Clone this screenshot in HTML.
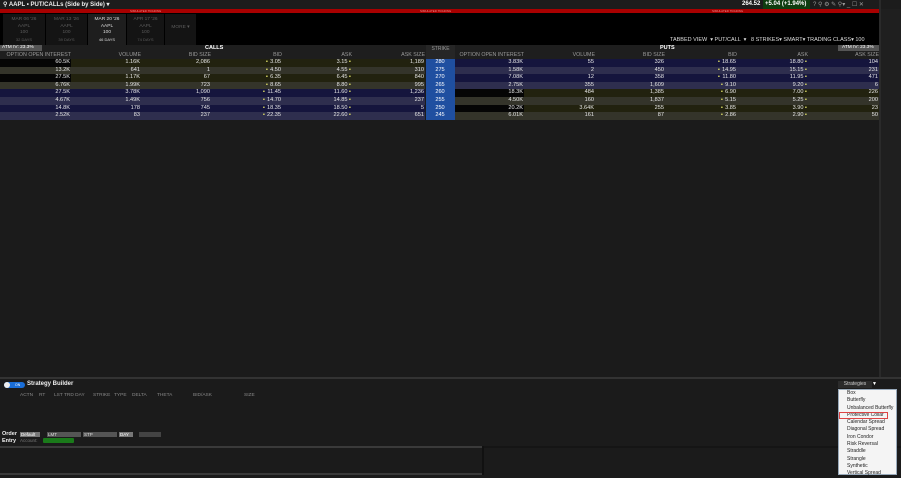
<!DOCTYPE html><html><head><style>
*{margin:0;padding:0;box-sizing:border-box}
body{width:901px;height:475px;background:#1b1b1b;font-family:"Liberation Sans",sans-serif;color:#ccc;position:relative;overflow:hidden;font-size:5.5px}
.a{position:absolute;white-space:nowrap}
.row{position:absolute;height:7.6px;line-height:7.6px;font-size:5.6px;color:#e6e6e6}
.row div{position:absolute;top:0;height:7.6px;text-align:right;padding-right:1px}
.hd{position:absolute;top:52px;height:7px;line-height:7px;font-size:5.3px;color:#9a9a9a;text-align:right}
.tab{position:absolute;top:14px;height:31px;background:#141414;text-align:center;font-size:4.8px;color:#5c5c5c;line-height:6.5px;padding-top:3px}
.dd div{height:7.3px;line-height:7.3px;padding-left:8px;font-size:5px;color:#222;white-space:nowrap;overflow:hidden}
</style></head><body>
<div class="a" style="left:0;top:0;width:901px;height:9px;background:#1c1c1c"></div>
<div class="a" style="left:3px;top:1px;font-size:6px;color:#eee;font-weight:bold">⚲ AAPL • PUT/CALLs (Side by Side) ▾</div>
<div class="a" style="left:742px;top:1px;font-size:6px;color:#fff;font-weight:bold">264.52</div>
<div class="a" style="left:763px;top:0;width:47px;height:9px;background:#0e3d10;font-size:6px;color:#fff;font-weight:bold;padding:1px 0 0 2px">+5.04 (+1.94%)</div>
<div class="a" style="left:813px;top:1px;font-size:6px;color:#999">? ⚲ ⚙ ✎ ⚲▾ _ ☐ ✕</div>
<div class="a" style="left:0;top:9px;width:880px;height:4px;background:#a80000;font-size:3px;color:#e88;line-height:4px"><span style="position:absolute;left:130px">SIMULATED TRADING</span><span style="position:absolute;left:420px">SIMULATED TRADING</span><span style="position:absolute;left:712px">SIMULATED TRADING</span></div>
<div class="a" style="left:0;top:13px;width:880px;height:32px;background:#000"></div>
<div class="tab" style="left:3px;width:42px">MAR 06 '26<br>AAPL<br>100<br><span style="font-size:4px">32 DAYS</span></div>
<div class="tab" style="left:46px;width:41px">MAR 13 '26<br>AAPL<br>100<br><span style="font-size:4px">39 DAYS</span></div>
<div class="tab" style="left:88px;width:38px;background:#1e1e1e;color:#ddd">MAR 20 '26<br>AAPL<br>100<br><span style="font-size:4px">46 DAYS</span></div>
<div class="tab" style="left:127px;width:37px">APR 17 '26<br>AAPL<br>100<br><span style="font-size:4px">74 DAYS</span></div>
<div class="tab" style="left:165px;width:31px;padding-top:11px">MORE ▾</div>
<div class="a" style="left:670px;top:37px;font-size:5.5px;color:#ddd">TABBED VIEW &nbsp;▾ PUT/CALL &nbsp;▾ &nbsp; 8 STRIKES▾ SMART▾ TRADING CLASS▾ 100</div>
<div class="a" style="left:0;top:45px;width:880px;height:14px;background:#1e1e1e"></div>
<div class="a" style="left:0;top:45px;width:42px;height:6px;background:#555;font-size:4.8px;color:#fff;line-height:6px;padding-left:2px">ATM IV: 23.3%</div>
<div class="a" style="left:838px;top:45px;width:42px;height:6px;background:#555;font-size:4.8px;color:#fff;line-height:6px;padding-left:4px">ATM IV: 23.3%</div>
<div class="a" style="left:205px;top:45px;font-size:5.5px;color:#fff;font-weight:bold">CALLS</div>
<div class="a" style="left:660px;top:45px;font-size:5.5px;color:#fff;font-weight:bold">PUTS</div>
<div class="a" style="left:426px;top:45px;width:29px;height:14px;background:#262626;font-size:5px;color:#999;text-align:center;line-height:8px">STRIKE</div>
<div class="hd" style="left:0;width:71px">OPTION OPEN INTEREST</div>
<div class="hd" style="left:71px;width:70px">VOLUME</div>
<div class="hd" style="left:141px;width:70px">BID SIZE</div>
<div class="hd" style="left:211px;width:71px">BID</div>
<div class="hd" style="left:282px;width:70px">ASK</div>
<div class="hd" style="left:352px;width:73px">ASK SIZE</div>
<div class="hd" style="left:455px;width:69px">OPTION OPEN INTEREST</div>
<div class="hd" style="left:524px;width:71px">VOLUME</div>
<div class="hd" style="left:595px;width:70px">BID SIZE</div>
<div class="hd" style="left:665px;width:72px">BID</div>
<div class="hd" style="left:737px;width:71px">ASK</div>
<div class="hd" style="left:808px;width:71px">ASK SIZE</div>
<div id="rows"></div>
<script>
var c=[["60.5K","1.16K","2,086","3.05","3.15","1,189","280"],["13.2K","641","1","4.50","4.55","310","275"],["27.5K","1.17K","67","6.35","6.45","840","270"],["6.76K","1.99K","723","8.65","8.80","995","265"],["27.5K","3.78K","1,090","11.45","11.60","1,236","260"],["4.67K","1.49K","756","14.70","14.85","237","255"],["14.8K","178","745","18.35","18.50","5","250"],["2.52K","83","237","22.35","22.60","651","245"]];
var p=[["3.83K","55","326","18.65","18.80","104"],["1.58K","2","450","14.95","15.15","231"],["7.08K","12","358","11.80","11.95","471"],["2.75K","355","1,609","9.10","9.20","6"],["18.3K","484","1,385","6.90","7.00","226"],["4.50K","160","1,837","5.15","5.25","200"],["20.2K","3.64K","255","3.85","3.90","23"],["6.01K","161","87","2.86","2.90","50"]];
var yA=["#22220f","#34342a"],nA=["#15153d","#2e2e4e"],h="";
var cx=[[0,71],[71,141],[141,211],[211,282],[282,352],[352,425]],px=[[455,524],[524,595],[595,665],[665,737],[737,808],[808,879]];
for(var i=0;i<8;i++){var y=59+i*7.6;var ci=i<4?yA[i%2]:nA[i%2],pi=i<4?nA[i%2]:yA[i%2];
h+='<div class="row" style="top:'+y+'px;left:0;width:901px">';
for(var j=0;j<6;j++){var bg=ci;if(j==0&&i<4&&i%2==0)bg="#050505";var t=c[i][j];if(j==3)t='<span style="color:#dd6;float:left;padding-left:'+(t.length>4?52:55)+'px">▪</span>'+t;if(j==4)t=t+' <span style="color:#dd6">▪</span>';h+='<div style="left:'+cx[j][0]+'px;width:'+(cx[j][1]-cx[j][0])+'px;background:'+bg+'">'+t+'</div>';}
h+='<div style="left:426px;width:29px;background:#1f4fa0;text-align:center;color:#fff">'+c[i][6]+'</div>';
for(var j=0;j<6;j++){var bg=pi;if(j==0&&i>=4&&i%2==0)bg="#050505";var t=p[i][j];if(j==3)t='<span style="color:#dd6;float:left;padding-left:'+(t.length>4?53:56)+'px">▪</span>'+t;if(j==4)t=t+' <span style="color:#dd6">▪</span>';h+='<div style="left:'+px[j][0]+'px;width:'+(px[j][1]-px[j][0])+'px;background:'+bg+'">'+t+'</div>';}
h+='</div>';}
document.getElementById('rows').innerHTML=h;
</script>
<div class="a" style="left:879px;top:0;width:2px;height:378px;background:#2a2a2a"></div>
<div class="a" style="left:881px;top:9px;width:20px;height:369px;background:#1f1f1f"></div>
<div class="a" style="left:0;top:377px;width:901px;height:2px;background:#333"></div>
<div class="a" style="left:4px;top:382px;width:21px;height:6px;background:#1a6ed8;border-radius:3px"></div>
<div class="a" style="left:4px;top:382px;width:6px;height:6px;background:#eee;border-radius:3px"></div>
<div class="a" style="left:15px;top:382px;font-size:3.5px;color:#fff;line-height:6px">ON</div>
<div class="a" style="left:27px;top:381px;font-size:6px;color:#eee;font-weight:bold">Strategy Builder</div>
<div class="a" style="left:20px;top:393px;font-size:4.8px;color:#888">ACTN</div>
<div class="a" style="left:39px;top:393px;font-size:4.8px;color:#888">RT</div>
<div class="a" style="left:54px;top:393px;font-size:4.8px;color:#888">LST TRD DAY</div>
<div class="a" style="left:93px;top:393px;font-size:4.8px;color:#888">STRIKE</div>
<div class="a" style="left:114px;top:393px;font-size:4.8px;color:#888">TYPE</div>
<div class="a" style="left:132px;top:393px;font-size:4.8px;color:#888">DELTA</div>
<div class="a" style="left:157px;top:393px;font-size:4.8px;color:#888">THETA</div>
<div class="a" style="left:193px;top:393px;font-size:4.8px;color:#888">BID/ASK</div>
<div class="a" style="left:244px;top:393px;font-size:4.8px;color:#888">SIZE</div>
<div class="a" style="left:2px;top:431px;font-size:5.5px;color:#eee;font-weight:bold;line-height:6.5px">Order<br>Entry</div>
<div class="a" style="left:20px;top:432px;width:20px;height:5px;background:#777;font-size:4.5px;color:#fff;line-height:5px;padding-left:1px">Default</div>
<div class="a" style="left:47px;top:432px;width:34px;height:5px;background:#555;font-size:4.5px;color:#ddd;line-height:5px;padding-left:1px">LMT</div>
<div class="a" style="left:83px;top:432px;width:34px;height:5px;background:#555;font-size:4.5px;color:#ddd;line-height:5px;padding-left:1px">STP</div>
<div class="a" style="left:119px;top:432px;width:14px;height:5px;background:#777;font-size:4.5px;color:#fff;line-height:5px;padding-left:1px">DAY</div>
<div class="a" style="left:139px;top:432px;width:22px;height:5px;background:#444"></div>
<div class="a" style="left:20px;top:438px;font-size:4.5px;color:#777">Account:</div>
<div class="a" style="left:43px;top:438px;width:31px;height:5px;background:#1a7a1a;border-radius:1px"></div>
<div class="a" style="left:0;top:446px;width:482px;height:2px;background:#3a3a3a"></div>
<div class="a" style="left:482px;top:446px;width:2px;height:29px;background:#111"></div>
<div class="a" style="left:484px;top:446px;width:417px;height:2px;background:#151515"></div>
<div class="a" style="left:0;top:473px;width:482px;height:2px;background:#3a3a3a"></div>
<div class="a" style="left:838px;top:381px;width:34px;height:7px;background:#2b2b2b;font-size:5px;color:#ccc;text-align:center;line-height:7px">Strategies</div>
<div class="a" style="left:872px;top:381px;font-size:5px;color:#fff">▼</div>
<div class="a dd" style="left:838px;top:389px;width:59px;height:86px;background:#f4f4f4;border:1px solid #9ab">
<div>Box</div><div>Butterfly</div><div>Unbalanced Butterfly</div><div style="outline:1px solid #d44;outline-offset:-1px;margin-right:8px">Protective Collar</div><div>Calendar Spread</div><div>Diagonal Spread</div><div>Iron Condor</div><div>Risk Reversal</div><div>Straddle</div><div>Strangle</div><div>Synthetic</div><div>Vertical Spread</div></div>
</body></html>
